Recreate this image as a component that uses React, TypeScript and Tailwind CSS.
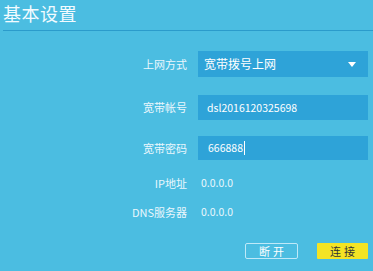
import React from "react";

export default function App() {
  const font = { fontFamily: '"Noto Sans CJK SC", "Noto Sans", sans-serif' };
  return (
    <div
      className="w-[373px] h-[271px] bg-[#4bbde1] overflow-hidden relative text-white"
      style={font}
    >
      <div className="pl-[3px] pt-[1px] text-[18px] leading-[24px] text-[#f2fbff] tracking-[0.5px]">
        基本设置
      </div>
      <div className="ml-[3px] mt-[5px] h-[1px] bg-[#2b9bcb]" />
      <div className="flex flex-col mt-[20px]">
        <div className="flex items-center h-[26px]">
          <div className="w-[187px] text-right text-[11px] text-[#eaf7fd]">上网方式</div>
          <div className="ml-[11px] w-[170px] h-[26px] bg-[#2ea3d8] flex items-center justify-between pl-[6px] pr-[12px] text-[12px] text-white">
            <span>宽带拨号上网</span>
            <svg width="8" height="5" viewBox="0 0 8 5">
              <path d="M0 0 L8 0 L4 5 Z" fill="#ffffff" />
            </svg>
          </div>
        </div>
        <div className="flex items-center h-[25px] mt-[18px]">
          <div className="w-[187px] text-right text-[11px] text-[#eaf7fd]">宽带帐号</div>
          <div className="ml-[11px] w-[170px] h-[25px] bg-[#2ea3d8] flex items-center pl-[9px] text-[10.5px] text-white">
            dsl2016120325698
          </div>
        </div>
        <div className="flex items-center h-[24px] mt-[16px]">
          <div className="w-[187px] text-right text-[11px] text-[#eaf7fd]">宽带密码</div>
          <div className="ml-[11px] w-[170px] h-[24px] bg-[#2ea3d8] flex items-center pl-[10px] text-[10.5px] text-white">
            666888<span className="inline-block w-[1px] h-[14px] bg-white ml-[1px]" />
          </div>
        </div>
        <div className="flex items-center h-[20px] mt-[13px]">
          <div className="w-[187px] text-right text-[11px] text-[#eaf7fd]">IP地址</div>
          <div className="ml-[14px] text-[10.5px] text-[#eaf7fd]">0.0.0.0</div>
        </div>
        <div className="flex items-center h-[20px] mt-[9px]">
          <div className="w-[187px] text-right text-[11px] text-[#eaf7fd]">DNS服务器</div>
          <div className="ml-[14px] text-[10.5px] text-[#eaf7fd]">0.0.0.0</div>
        </div>
        <div className="flex justify-end mt-[21px] pr-[5px] gap-[19px]">
          <button className="w-[53px] h-[16px] border border-[#bfe9f8] rounded-[2px] text-[11px] leading-[14px] text-white tracking-[3px] pl-[3px]">
            断开
          </button>
          <button className="w-[51px] h-[16px] bg-[#f4e424] rounded-[1px] text-[11px] leading-[16px] text-[#333] tracking-[3px] pl-[3px]">
            连接
          </button>
        </div>
      </div>
    </div>
  );
}
